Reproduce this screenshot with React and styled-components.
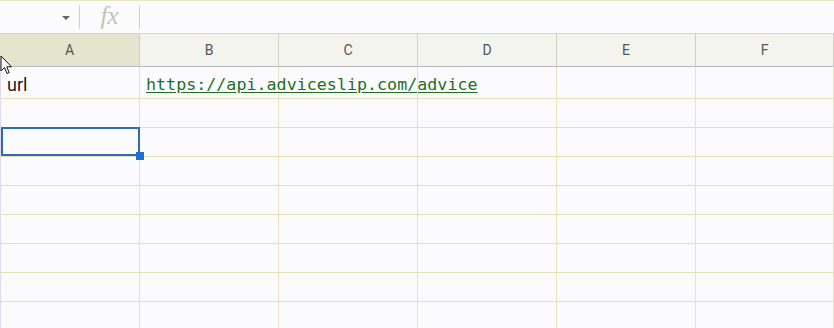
import React from 'react';
import styled, { createGlobalStyle } from 'styled-components';

const GlobalStyle = createGlobalStyle`
  html, body {
    margin: 0;
    padding: 0;
    background: #fbfbfd;
  }
  body {
    font-family: Roboto, "Liberation Sans", Arial, sans-serif;
  }
`;

const Page = styled.div`
  position: relative;
  width: 834px;
  height: 328px;
  overflow: hidden;
  background: #fbfbfd;
`;

const FormulaBar = styled.div`
  display: flex;
  align-items: center;
  height: 32px;
  border-top: 1px solid #ebe7c4;
  border-bottom: 1px solid #d9d8cc;
`;

const NameBox = styled.div`
  width: 79px;
  height: 100%;
  display: flex;
  align-items: center;
  justify-content: flex-end;
  padding-right: 9px;
  box-sizing: border-box;
`;

const Caret = styled.span`
  width: 0;
  height: 0;
  border-left: 4px solid transparent;
  border-right: 4px solid transparent;
  border-top: 4px solid #666;
  margin-top: 2px;
`;

const Divider = styled.span`
  width: 1px;
  height: 24px;
  background: #d4d2c4;
`;

const FxLabel = styled.div`
  width: 59px;
  text-align: center;
  font-family: "Liberation Serif", "DejaVu Serif", serif;
  font-style: italic;
  font-size: 25px;
  color: #c4c4b4;
  line-height: 1;
  margin-top: -3px;
`;

const Grid = styled.div`
  display: grid;
  grid-template-columns: 140px repeat(4, 139px) 1fr;
`;

const HeaderCell = styled.div`
  display: flex;
  align-items: center;
  justify-content: center;
  font-size: 14px;
  color: #555;
  background: ${(p) => (p.$active ? '#e3e5cf' : '#f4f4ef')};
  border-right: 1px solid #cfcfc4;
  border-bottom: 1px solid #b9b9c4;
  box-sizing: border-box;
  height: 33px;
`;

const Cell = styled.div`
  position: relative;
  height: ${(p) => p.$h}px;
  box-sizing: border-box;
  border-right: 1px solid #e8e4bc;
  border-bottom: 1px solid ${(p) => (p.$odd ? '#dcdaf0' : '#e6e2b8')};
  display: flex;
  align-items: center;
  padding-left: 6px;
  ${(p) => (p.$first ? 'border-left: 1px solid #dcdaec;' : '')}
`;

const LinkText = styled.span`
  font-family: "DejaVu Sans Mono", "Liberation Mono", monospace;
  font-size: 16.7px;
  color: #1f6f1f;
  text-decoration: underline;
  text-underline-offset: 2px;
  padding-top: 2px;
`;

const PlainText = styled.span`
  font-family: Roboto, "Liberation Sans", sans-serif;
  font-size: 18px;
  color: #1a1a1a;
  padding-top: 3px;
`;

const Selection = styled.div`
  position: absolute;
  z-index: 2;
  left: 0;
  top: -1px;
  right: -1px;
  bottom: 0;
  border: 2px solid #2f6cb0;
  pointer-events: none;
`;

const FillHandle = styled.div`
  position: absolute;
  right: -6px;
  bottom: -6px;
  width: 8px;
  height: 8px;
  background: #1c6fd8;
`;

const Cursor = styled.svg`
  position: absolute;
  z-index: 3;
  left: 0;
  top: 55px;
`;

const columns = ['A', 'B', 'C', 'D', 'E', 'F'];
const rowHeights = [32, 29, 29, 29, 29, 29, 29, 29, 29];

export default function App() {
  return (
    <>
      <GlobalStyle />
      <Page>
        <FormulaBar>
          <NameBox>
            <Caret />
          </NameBox>
          <Divider />
          <FxLabel>fx</FxLabel>
          <Divider />
        </FormulaBar>
        <Grid>
          {columns.map((c, i) => (
            <HeaderCell key={c} $active={i === 0}>
              {c}
            </HeaderCell>
          ))}
          {rowHeights.map((h, r) =>
            columns.map((c, i) => (
              <Cell key={`${c}${r}`} $h={h} $odd={r % 2 === 1} $first={i === 0}>
                {r === 0 && i === 0 ? <PlainText>url</PlainText> : null}
                {r === 0 && i === 1 ? (
                  <LinkText>https://api.adviceslip.com/advice</LinkText>
                ) : null}
                {r === 2 && i === 0 ? (
                  <Selection>
                    <FillHandle />
                  </Selection>
                ) : null}
              </Cell>
            ))
          )}
        </Grid>
        <Cursor width="14" height="22" viewBox="0 0 14 22">
          <path
            d="M1 1 L1 16 L4.5 12.5 L7 18.5 L9.2 17.6 L6.8 11.8 L11.5 11.8 Z"
            fill="#fff"
            stroke="#111"
            strokeWidth="1"
            strokeLinejoin="round"
          />
        </Cursor>
      </Page>
    </>
  );
}
